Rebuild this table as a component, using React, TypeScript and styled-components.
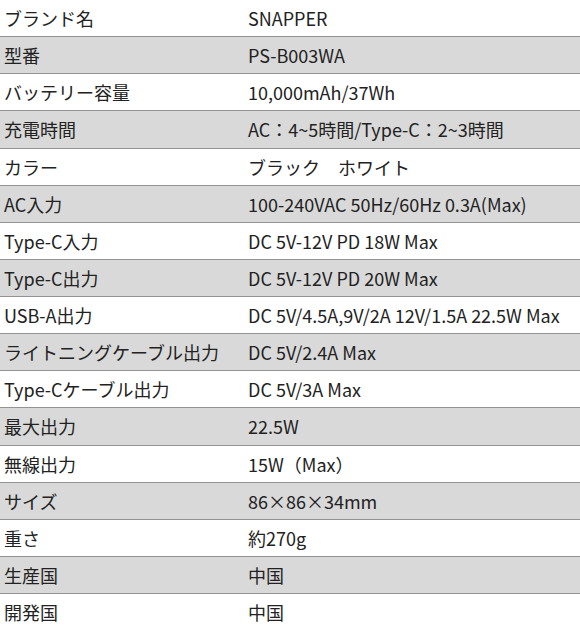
import React, { FC } from 'react';
import styled, { createGlobalStyle } from 'styled-components';

interface ISpecRow {
  label: string;
  value: string;
}

const specs: ISpecRow[] = [
  { label: 'ブランド名', value: 'SNAPPER' },
  { label: '型番', value: 'PS-B003WA' },
  { label: 'バッテリー容量', value: '10,000mAh/37Wh' },
  { label: '充電時間', value: 'AC：4~5時間/Type-C：2~3時間' },
  { label: 'カラー', value: 'ブラック　ホワイト' },
  { label: 'AC入力', value: '100-240VAC 50Hz/60Hz 0.3A(Max)' },
  { label: 'Type-C入力', value: 'DC 5V-12V PD 18W Max' },
  { label: 'Type-C出力', value: 'DC 5V-12V PD 20W Max' },
  { label: 'USB-A出力', value: 'DC 5V/4.5A,9V/2A 12V/1.5A 22.5W Max' },
  { label: 'ライトニングケーブル出力', value: 'DC 5V/2.4A Max' },
  { label: 'Type-Cケーブル出力', value: 'DC 5V/3A Max' },
  { label: '最大出力', value: '22.5W' },
  { label: '無線出力', value: '15W（Max）' },
  { label: 'サイズ', value: '86×86×34mm' },
  { label: '重さ', value: '約270g' },
  { label: '生産国', value: '中国' },
  { label: '開発国', value: '中国' },
];

const App: FC = () => {
  return (
    <>
      <GlobalStyle />
      <SpecTable>
        {specs.map((row, i) => (
          <Row key={row.label} striped={i % 2 === 1}>
            <Cell>{row.label}</Cell>
            <Cell>{row.value}</Cell>
          </Row>
        ))}
      </SpecTable>
    </>
  );
};

export default App;

const GlobalStyle = createGlobalStyle`
  html, body {
    margin: 0;
    padding: 0;
    background: #ffffff;
  }
  body {
    font-family: "Noto Sans CJK JP", "Noto Sans", sans-serif;
    color: #222222;
  }
`;

const SpecTable = styled.div`
  width: 580px;
  display: flex;
  flex-direction: column;
`;

const Row = styled.div<{ striped: boolean }>`
  display: grid;
  grid-template-columns: 244px 1fr;
  height: 37.14px;
  flex-shrink: 0;
  box-sizing: border-box;
  align-items: center;
  background: ${({ striped }) => (striped ? '#d9d9d9' : '#ffffff')};
  border-bottom: 1px solid #939393;
`;

const Cell = styled.div`
  padding: 0 4px;
  font-size: 18px;
  line-height: 1;
  white-space: nowrap;
`;
